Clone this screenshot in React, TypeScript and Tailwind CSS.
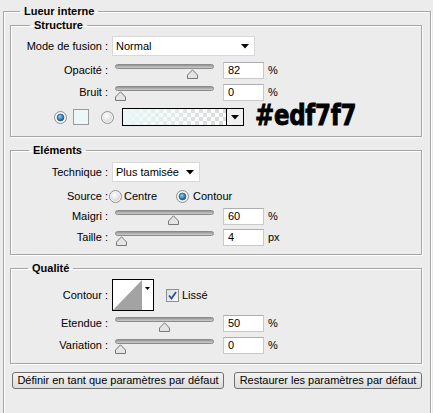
import type { ReactNode } from "react";

const base = "font-['Liberation_Sans',Arial,sans-serif] text-[11px] text-black";

function Group({ title, legendClass, className, children }: { title: string; legendClass: string; className?: string; children: ReactNode }) {
  return (
    <fieldset className={`border border-[#a5a5a5] shadow-[inset_1px_1px_0_#fff,1px_1px_0_#fff] ${className ?? ""}`}>
      <legend className={`px-[4px] text-[11px] font-bold leading-[14px] ${legendClass}`}>{title}</legend>
      {children}
    </fieldset>
  );
}

function Arrow() {
  return (
    <svg width="8" height="5" viewBox="0 0 8 5">
      <path d="M0 0 H8 L4 4.5 Z" fill="#000" />
    </svg>
  );
}

function Slider({ value, max = 100 }: { value: number; max?: number }) {
  const left = Math.round((value / max) * 88);
  return (
    <div className="relative h-[17px] w-[99px]">
      <div className="mt-[4px] h-[5px] rounded-full border border-[#8a8a8a] bg-gradient-to-b from-[#959595] to-[#cfcfcf]" />
      <svg className="absolute top-[5px]" style={{ left }} width="11" height="10" viewBox="0 0 11 10">
        <path d="M0.5 9.5 V6 L5.5 0.8 L10.5 6 V9.5 Z" fill="#e4e4e4" stroke="#787878" />
      </svg>
    </div>
  );
}

function Field({ children }: { children: ReactNode }) {
  return (
    <div className="h-[17px] w-[41px] border border-[#c9c9c9] border-t-[#abadb3] bg-white pl-[4px] leading-[15px]">
      {children}
    </div>
  );
}

function SliderRow({ label, value, max, unit, className }: { label: string; value: number; max?: number; unit: string; className: string }) {
  return (
    <div className={`flex h-[17px] items-center ${className}`}>
      <span className="w-[97px] text-right">{label}</span>
      <div className="ml-[7px]">
        <Slider value={value} max={max} />
      </div>
      <div className="ml-[9px]">
        <Field>{value}</Field>
      </div>
      <span className="ml-[4px]">{unit}</span>
    </div>
  );
}

function Radio({ checked }: { checked?: boolean }) {
  return (
    <svg width="13" height="13" viewBox="0 0 13 13">
      <defs>
        <radialGradient id={checked ? "rOn" : "rOff"} cx="0.4" cy="0.35" r="0.7">
          <stop offset="0" stopColor={checked ? "#8fd3f5" : "#ffffff"} />
          <stop offset="1" stopColor={checked ? "#0e4a7a" : "#d6d6d6"} />
        </radialGradient>
      </defs>
      <circle cx="6.5" cy="6.5" r="6" fill="#f4f4f4" stroke="#8f8f8f" />
      {checked ? (
        <circle cx="6.5" cy="6.5" r="3.4" fill="url(#rOn)" stroke="#1e5f8e" strokeWidth="0.8" />
      ) : (
        <circle cx="6.5" cy="6.5" r="4.6" fill="url(#rOff)" />
      )}
    </svg>
  );
}

function Select({ text, width }: { text: string; width: string }) {
  return (
    <div className={`flex h-[20px] items-center justify-between border border-[#d8d8d8] bg-white pl-[3px] pr-[5px] ${width}`}>
      <span>{text}</span>
      <Arrow />
    </div>
  );
}

export default function App() {
  return (
    <div className={`h-[413px] w-[433px] overflow-hidden bg-[#ececec] pt-[4px] ${base}`}>
      <fieldset className="ml-[3px] w-[428px] border border-[#a5a5a5] pb-[40px] shadow-[inset_1px_1px_0_#fff,1px_1px_0_#fff]">
        <legend className="ml-[16px] px-[4px] text-[11px] font-bold leading-[14px]">Lueur interne</legend>

        <Group title="Structure" legendClass="ml-[19px]" className="ml-[6px] w-[412px] pb-[10px]">
          <div className="mt-[4px] flex h-[20px] items-center">
            <span className="w-[97px] text-right">Mode de fusion :</span>
            <div className="ml-[4px]">
              <Select text="Normal" width="w-[143px]" />
            </div>
          </div>
          <SliderRow label="Opacité :" value={82} unit="%" className="mt-[6px]" />
          <SliderRow label="Bruit :" value={0} unit="%" className="mt-[5px]" />
          <div className="mt-[7px] flex h-[18px] items-center">
            <div className="ml-[43px] flex">
              <Radio checked />
            </div>
            <div className="ml-[6px] h-[16px] w-[16px] border border-[#9a9a9a] bg-[#edf7f7]" />
            <div className="ml-[12px] flex">
              <Radio />
            </div>
            <div className="ml-[8px] flex h-[18px] w-[122px] border border-black">
              <div className="flex-1 bg-[repeating-conic-gradient(#d9d9d9_0_25%,#ffffff_0_50%)] bg-[length:8px_8px]">
                <div className="h-full w-full bg-gradient-to-r from-[#edf7f7] to-transparent" />
              </div>
              <div className="flex w-[17px] items-center justify-center border-l border-black bg-[#f0f0f0]">
                <Arrow />
              </div>
            </div>
            <span className="ml-[11px] -mt-[3px] origin-left scale-x-[0.91] font-['DejaVu_Sans_Condensed','DejaVu_Sans',sans-serif] text-[28px] font-black leading-[18px] tracking-[-0.3px] [-webkit-text-stroke:0.8px_#000]">
              #edf7f7
            </span>
          </div>
        </Group>

        <Group title="Eléments" legendClass="ml-[18px]" className="ml-[6px] mt-[6px] w-[412px] pb-[8px]">
          <div className="mt-[5px] flex h-[20px] items-center">
            <span className="w-[97px] text-right">Technique :</span>
            <div className="ml-[4px]">
              <Select text="Plus tamisée" width="w-[88px]" />
            </div>
          </div>
          <div className="mt-[6px] flex h-[17px] items-center">
            <span className="w-[97px] text-right">Source :</span>
            <div className="ml-[1px] flex">
              <Radio />
            </div>
            <span className="ml-[2px]">Centre</span>
            <div className="ml-[19px] flex">
              <Radio checked />
            </div>
            <span className="ml-[4px]">Contour</span>
          </div>
          <SliderRow label="Maigri :" value={60} unit="%" className="mt-[3px]" />
          <SliderRow label="Taille :" value={4} max={250} unit="px" className="mt-[4px]" />
        </Group>

        <Group title="Qualité" legendClass="ml-[17px]" className="ml-[6px] mt-[6px] w-[412px] pb-[9px]">
          <div className="mt-[4px] flex h-[32px] items-center">
            <span className="w-[97px] text-right">Contour :</span>
            <div className="ml-[4px] flex h-[32px] w-[42px] border border-black bg-white">
              <svg width="29" height="30" viewBox="0 0 29 30">
                <path d="M0 30 L29 0 V30 Z" fill="#a3a3a3" />
              </svg>
              <div className="flex flex-1 justify-center pt-[7px]">
                <svg width="5" height="3" viewBox="0 0 5 3">
                  <path d="M0 0 H5 L2.5 3 Z" fill="#000" />
                </svg>
              </div>
            </div>
            <div className="ml-[12px] flex h-[13px] w-[13px] items-center justify-center border border-[#8e8f8f] bg-gradient-to-br from-[#dcdcdc] to-[#fafafa]">
              <svg width="9" height="9" viewBox="0 0 9 9">
                <path d="M1 4.5 L3.5 7.5 L8 1" fill="none" stroke="#2a4fa0" strokeWidth="1.8" />
              </svg>
            </div>
            <span className="ml-[3px]">Lissé</span>
          </div>
          <SliderRow label="Etendue :" value={50} unit="%" className="mt-[4px]" />
          <SliderRow label="Variation :" value={0} unit="%" className="mt-[5px]" />
        </Group>

        <div className="mt-[8px] flex">
          <button className="ml-[8px] h-[17px] w-[212px] rounded-[3px] border border-[#707070] bg-gradient-to-b from-[#f3f3f3] to-[#dcdcdc] leading-[15px]">
            Définir en tant que paramètres par défaut
          </button>
          <button className="ml-[10px] h-[17px] w-[188px] rounded-[3px] border border-[#707070] bg-gradient-to-b from-[#f3f3f3] to-[#dcdcdc] leading-[15px]">
            Restaurer les paramètres par défaut
          </button>
        </div>
      </fieldset>
    </div>
  );
}
